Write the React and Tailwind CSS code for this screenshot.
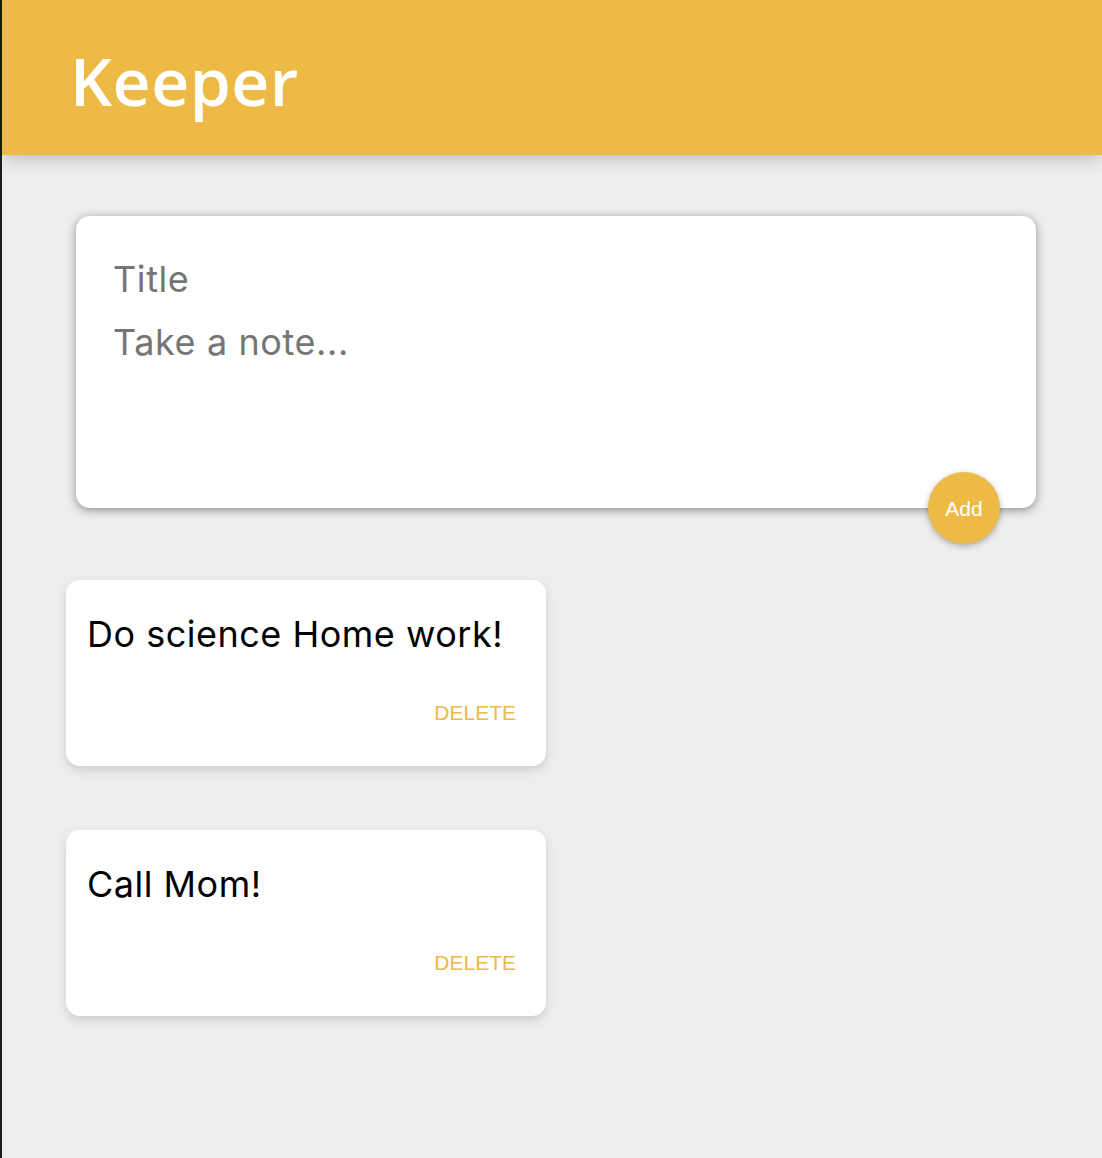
import React from "react";

const notes = [
    { id: 1, title: "Do science Home work!" },
    { id: 2, title: "Call Mom!" },
];

function Header() {
    return (
        <header className="flex h-[155px] items-center bg-[#ecba45] px-[68px] pt-[4px] shadow-[0_0_20px_rgba(0,0,0,0.3)]">
            <h1 className="font-['Open_Sans',sans-serif] text-[66px] font-semibold leading-none tracking-[0.5px] text-white">
                Keeper
            </h1>
        </header>
    );
}

function CreateArea() {
    return (
        <form className="relative ml-[74px] mt-[61px] h-[292px] w-[960px] rounded-[14px] bg-white px-[37px] pt-[32px] shadow-[0_2px_10px_rgb(138,137,137)]">
            <div className="font-['Inter',sans-serif] text-[36px] leading-[63px] tracking-[0.6px] text-[#757575]">
                <p>Title</p>
                <p>Take a note...</p>
            </div>
            <button
                type="button"
                className="absolute bottom-[-36px] right-[36px] flex h-[72px] w-[72px] items-center justify-center rounded-full bg-[#ecba45] pt-[2px] font-['Liberation_Sans',sans-serif] text-[21px] text-white shadow-[0_2px_6px_rgba(0,0,0,0.3)]"
            >
                Add
            </button>
        </form>
    );
}

function Note({ title }) {
    return (
        <div className="flex h-[186px] w-[480px] flex-col rounded-[14px] bg-white px-[21px] pt-[36px] shadow-[0_4px_10px_#ccc]">
            <h2 className="font-['Inter',sans-serif] text-[36px] leading-none tracking-[0.5px] text-black">
                {title}
            </h2>
            <div className="mt-auto mb-[43px] flex justify-end pr-[9px]">
                <button
                    type="button"
                    className="font-['Liberation_Sans',sans-serif] text-[21px] leading-none text-[#ecba45]"
                >
                    DELETE
                </button>
            </div>
        </div>
    );
}

export default function App() {
    return (
        <div className="min-h-screen border-l-2 border-[#1b1d21] bg-[#eeeeee]">
            <Header />
            <CreateArea />
            <div className="ml-[64px] mt-[72px] flex flex-col gap-[64px] pb-[100px]">
                {notes.map((note) => (
                    <Note key={note.id} title={note.title} />
                ))}
            </div>
        </div>
    );
}
